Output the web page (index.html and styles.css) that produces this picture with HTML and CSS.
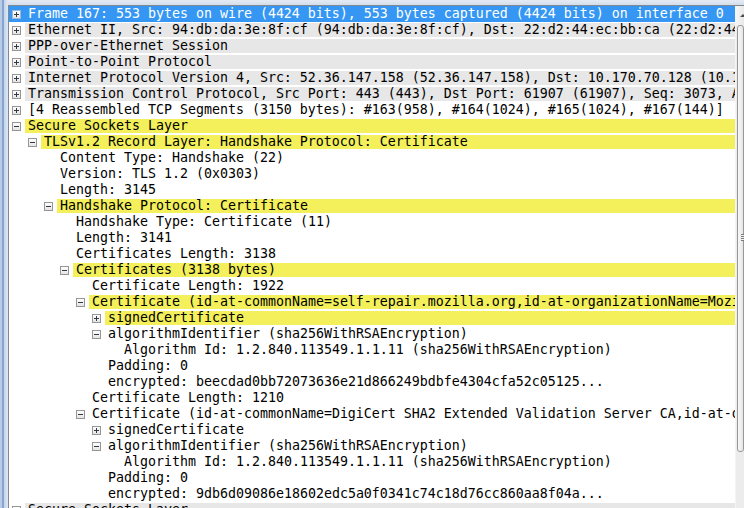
FILE: index.html
```html
<!DOCTYPE html>
<html lang="en">
<head>
  <meta charset="UTF-8">
  <title>Packet Details</title>
  <link rel="stylesheet" href="styles.css">
</head>
<body>
  <div class="window">
    <div class="edge"></div>
    <div class="main">
      <div class="topgap"></div>
      <div class="pane">
        <div class="tree">
          <div class="row lv0 sel"><span class="exp plus"></span><span class="label">Frame 167: 553 bytes on wire (4424 bits), 553 bytes captured (4424 bits) on interface 0</span></div>
          <div class="row lv0 grey"><span class="exp plus"></span><span class="label">Ethernet II, Src: 94:db:da:3e:8f:cf (94:db:da:3e:8f:cf), Dst: 22:d2:44:ec:bb:ca (22:d2:44:ec:bb:ca)</span></div>
          <div class="row lv0 grey"><span class="exp plus"></span><span class="label">PPP-over-Ethernet Session</span></div>
          <div class="row lv0 grey"><span class="exp plus"></span><span class="label">Point-to-Point Protocol</span></div>
          <div class="row lv0 grey"><span class="exp plus"></span><span class="label">Internet Protocol Version 4, Src: 52.36.147.158 (52.36.147.158), Dst: 10.170.70.128 (10.170.70.128)</span></div>
          <div class="row lv0 grey"><span class="exp plus"></span><span class="label">Transmission Control Protocol, Src Port: 443 (443), Dst Port: 61907 (61907), Seq: 3073, Ack: 1, Len: 144</span></div>
          <div class="row lv0"><span class="exp plus"></span><span class="label">[4 Reassembled TCP Segments (3150 bytes): #163(958), #164(1024), #165(1024), #167(144)]</span></div>
          <div class="row lv0 hl"><span class="exp"></span><span class="label">Secure Sockets Layer</span></div>
          <div class="row lv1 hl"><span class="exp"></span><span class="label">TLSv1.2 Record Layer: Handshake Protocol: Certificate</span></div>
          <div class="row lv2 leaf"><span class="exp"></span><span class="label">Content Type: Handshake (22)</span></div>
          <div class="row lv2 leaf"><span class="exp"></span><span class="label">Version: TLS 1.2 (0x0303)</span></div>
          <div class="row lv2 leaf"><span class="exp"></span><span class="label">Length: 3145</span></div>
          <div class="row lv2 hl"><span class="exp"></span><span class="label">Handshake Protocol: Certificate</span></div>
          <div class="row lv3 leaf"><span class="exp"></span><span class="label">Handshake Type: Certificate (11)</span></div>
          <div class="row lv3 leaf"><span class="exp"></span><span class="label">Length: 3141</span></div>
          <div class="row lv3 leaf"><span class="exp"></span><span class="label">Certificates Length: 3138</span></div>
          <div class="row lv3 hl"><span class="exp"></span><span class="label">Certificates (3138 bytes)</span></div>
          <div class="row lv4 leaf"><span class="exp"></span><span class="label">Certificate Length: 1922</span></div>
          <div class="row lv4 hl"><span class="exp"></span><span class="label">Certificate (id-at-commonName=self-repair.mozilla.org,id-at-organizationName=Mozilla Corporation,id-at-localityName=Mountain View)</span></div>
          <div class="row lv5 hl"><span class="exp plus"></span><span class="label">signedCertificate</span></div>
          <div class="row lv5"><span class="exp"></span><span class="label">algorithmIdentifier (sha256WithRSAEncryption)</span></div>
          <div class="row lv6 leaf"><span class="exp"></span><span class="label">Algorithm Id: 1.2.840.113549.1.1.11 (sha256WithRSAEncryption)</span></div>
          <div class="row lv5 leaf"><span class="exp"></span><span class="label">Padding: 0</span></div>
          <div class="row lv5 leaf"><span class="exp"></span><span class="label">encrypted: beecdad0bb72073636e21d866249bdbfe4304cfa52c05125...</span></div>
          <div class="row lv4 leaf"><span class="exp"></span><span class="label">Certificate Length: 1210</span></div>
          <div class="row lv4"><span class="exp"></span><span class="label">Certificate (id-at-commonName=DigiCert SHA2 Extended Validation Server CA,id-at-organizationalUnitName=www.digicert.com)</span></div>
          <div class="row lv5"><span class="exp plus"></span><span class="label">signedCertificate</span></div>
          <div class="row lv5"><span class="exp"></span><span class="label">algorithmIdentifier (sha256WithRSAEncryption)</span></div>
          <div class="row lv6 leaf"><span class="exp"></span><span class="label">Algorithm Id: 1.2.840.113549.1.1.11 (sha256WithRSAEncryption)</span></div>
          <div class="row lv5 leaf"><span class="exp"></span><span class="label">Padding: 0</span></div>
          <div class="row lv5 leaf"><span class="exp"></span><span class="label">encrypted: 9db6d09086e18602edc5a0f0341c74c18d76cc860aa8f04a...</span></div>
          <div class="row lv0 grey"><span class="exp plus"></span><span class="label">Secure Sockets Layer</span></div>
        </div>
        <div class="scroll">
          <div class="arrow"></div>
          <div class="thumb"></div>
        </div>
      </div>
    </div>
  </div>
</body>
</html>
```

FILE: styles.css
```css
/* Packet details pane, Windows 7 style */
body { margin: 0; background: #d6e1ef; font-family: "DejaVu Sans Mono", "Liberation Mono", monospace; font-size: 13.29px; color: #000; overflow: hidden; }
.window { display: flex; height: 508px; }
.edge { width: 8px; flex: none; background: linear-gradient(to right, #b9cbe5 0, #b9cbe5 2px, #86a5d2 2px, #86a5d2 4px, #c4d4ea 4px, #dfe7f2 8px); }
.main { flex: 1; display: flex; flex-direction: column; min-width: 0; }
.topgap { height: 5px; flex: none; background: linear-gradient(#e4ebf4, #d3deec); }
.pane { flex: 1; display: flex; border-top: 1px solid #828790; border-left: 1px solid #828790; background: #fff; overflow: hidden; }
.tree { width: 726px; flex: none; overflow: hidden; }

.row { height: 16px; display: flex; padding-left: 3px; white-space: nowrap; }
.lv1 { padding-left: 19px; }
.lv2 { padding-left: 35px; }
.lv3 { padding-left: 51px; }
.lv4 { padding-left: 67px; }
.lv5 { padding-left: 83px; }
.lv6 { padding-left: 99px; }

.exp { position: relative; flex: none; box-sizing: border-box; width: 9px; height: 9px; margin-top: 4px; margin-right: 4px; border: 1px solid #969696; background: linear-gradient(#ffffff, #e4e4e4); }
.exp::before { content: ""; position: absolute; left: 1px; top: 3px; width: 5px; height: 1px; background: #333a44; }
.plus::after { content: ""; position: absolute; left: 3px; top: 1px; width: 1px; height: 5px; background: #333a44; }
.leaf .exp { visibility: hidden; }

.label { flex: 1; margin: 1px 0; padding-left: 3px; line-height: 14px; overflow: hidden; }
.grey .label { background: #e7e7e7; }
.hl .label { background: #f3f05c; }
.sel { background: #3597f3; color: #fff; }
.sel .exp { border-color: #9fb8d8; }

.scroll { flex: 1; display: flex; flex-direction: column; background: #ececec; border-left: 1px solid #f4f4f4; }
.arrow { height: 19px; flex: none; position: relative; background: linear-gradient(to right, #f6f6f6, #e8e8e8); }
.arrow::after { content: ""; position: absolute; left: 4px; top: 8px; border-left: 3px solid transparent; border-right: 3px solid transparent; border-bottom: 3px solid #4d4d4d; }
.thumb { position: relative; height: 425px; margin-left: 1px; border: 1px solid #989898; border-radius: 3px; background: linear-gradient(to right, #f8f8f8, #e6e6e6); }
.thumb::after { content: ""; position: absolute; left: 3px; top: 208px; width: 6px; height: 7px; background: repeating-linear-gradient(#7a7a7a 0, #7a7a7a 1px, #f2f2f2 1px, #f2f2f2 2px); }
```
